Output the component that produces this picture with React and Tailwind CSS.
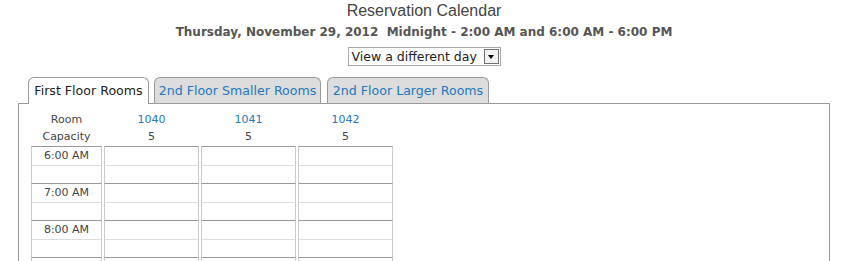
import React from "react";

const rows = [
  { label: "6:00 AM", hour: true },
  { label: "", hour: false },
  { label: "7:00 AM", hour: true },
  { label: "", hour: false },
  { label: "8:00 AM", hour: true },
  { label: "", hour: false },
  { label: "", hour: true },
  { label: "", hour: false },
];

function Row({ label, hour }) {
  const top = hour ? "border-t-[#999999] h-[19px]" : "border-t-[#dddddd] h-[18px]";
  return (
    <div className="grid grid-cols-[71px_95px_95px_95px] gap-x-[2px]">
      <div className={`border border-b-0 border-x-[#cccccc] ${top} flex items-center justify-center text-[11px] text-[#444]`}>
        {label}
      </div>
      <div className={`border border-b-0 border-x-[#cccccc] ${top}`}></div>
      <div className={`border border-b-0 border-x-[#cccccc] ${top}`}></div>
      <div className={`border border-b-0 border-x-[#cccccc] ${top}`}></div>
    </div>
  );
}

export default function App() {
  return (
    <div className="w-[856px] h-[261px] overflow-hidden bg-white font-['DejaVu_Sans',sans-serif]">
      <div className="w-[848px]">
        <div className="text-center font-['Liberation_Sans',Arial,sans-serif] text-[16px] leading-[20px] pt-[1px] text-[#444444]">
          Reservation Calendar
        </div>
        <div className="text-center text-[12px] leading-[18px] font-bold text-[#555555] mt-[2px] whitespace-pre">
          {"Thursday, November 29, 2012  Midnight - 2:00 AM and 6:00 AM - 6:00 PM"}
        </div>
        <div className="flex justify-center mt-[6px]">
          <div className="w-[153px] h-[19px] border border-[#a9a9a9] flex items-center pl-[3px] pr-[1px] text-[12.5px] text-[#222]">
            <span className="leading-[17px]">View a different day</span>
            <div className="ml-auto w-[15px] h-[15px] border border-[#707070] bg-[#f2f2f2] flex items-center justify-center">
              <div className="w-0 h-0 border-l-[3.5px] border-r-[3.5px] border-t-[4px] border-l-transparent border-r-transparent border-t-black"></div>
            </div>
          </div>
        </div>
      </div>
      <div className="flex items-end pl-[28px] mt-[11px] h-[26px]">
        <div className="relative z-10 w-[121px] h-[27px] -mb-px border border-b-0 border-[#999999] rounded-t-[6px] bg-white flex items-center justify-center text-[12.6px] text-[#222]">
          First Floor Rooms
        </div>
        <div className="ml-[5px] w-[167px] h-[26px] border border-b-0 border-[#999999] rounded-t-[6px] bg-[#dddddd] flex items-center justify-center text-[12.6px] text-[#2478be] pt-[1px]">
          2nd Floor Smaller Rooms
        </div>
        <div className="ml-[6px] w-[162px] h-[26px] border border-b-0 border-[#999999] rounded-t-[6px] bg-[#dddddd] flex items-center justify-center text-[12.6px] text-[#2478be] pt-[1px]">
          2nd Floor Larger Rooms
        </div>
      </div>
      <div className="ml-[18px] w-[812px] h-[200px] border border-[#999999] pt-[8px] pl-[12px]">
        <div className="grid grid-cols-[71px_95px_95px_95px] gap-x-[2px] text-[11px]">
          <div className="h-[17px] flex items-center justify-center text-[#444]">Room</div>
          <div className="h-[17px] flex items-center justify-center text-[#2478be]">1040</div>
          <div className="h-[17px] flex items-center justify-center text-[#2478be]">1041</div>
          <div className="h-[17px] flex items-center justify-center text-[#2478be]">1042</div>
          <div className="h-[17px] flex items-center justify-center text-[#444]">Capacity</div>
          <div className="h-[17px] flex items-center justify-center text-[#444]">5</div>
          <div className="h-[17px] flex items-center justify-center text-[#444]">5</div>
          <div className="h-[17px] flex items-center justify-center text-[#444]">5</div>
        </div>
        <div>
          {rows.map((r, i) => (
            <Row key={i} {...r} />
          ))}
        </div>
      </div>
    </div>
  );
}
